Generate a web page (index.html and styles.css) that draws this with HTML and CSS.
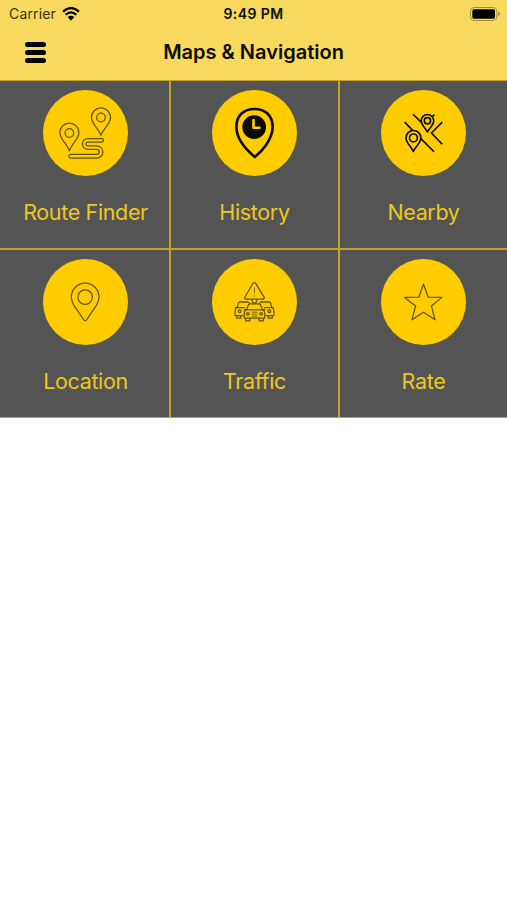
FILE: index.html
```
<!DOCTYPE html>
<html lang="en">
<head>
    <meta charset="UTF-8">
    <meta name="viewport" content="width=device-width, initial-scale=1.0">
    <title>Maps &amp; Navigation</title>
    <link rel="stylesheet" href="styles.css">
</head>
<body>
    <header class="header">
        <div class="status-bar">
            <div class="carrier">
                <span>Carrier</span>
                <svg class="wifi" viewBox="0 0 54 42">
                    <path d="M3 14 Q27 -8 51 14" />
                    <path d="M11 23 Q27 9 43 23" />
                    <path class="wifi-dot" d="M17 30 Q27 22 37 30 L27 41 Z" />
                </svg>
            </div>
            <div class="time">9:49 PM</div>
            <div class="battery-wrap">
                <svg class="battery" viewBox="0 0 90 42">
                    <rect class="battery-body" x="1.5" y="1.5" width="79" height="39" rx="11" />
                    <rect class="battery-level" x="7" y="7" width="68" height="28" rx="5" />
                    <path class="battery-cap" d="M84 14 Q90 17 90 21 Q90 25 84 28 Z" />
                </svg>
            </div>
        </div>
        <div class="nav-bar">
            <button class="menu-btn" aria-label="Menu">
                <span></span>
                <span></span>
                <span></span>
            </button>
            <h1>Maps &amp; Navigation</h1>
        </div>
    </header>

    <main class="menu-grid">
        <a class="menu-item first">
            <svg class="icon" viewBox="21 17 258 258">
                <path d="M101 200 C95 180 72 164 72 145 A29 29 0 0 1 130 145 C130 164 107 180 101 200 Z" />
                <circle cx="101" cy="146" r="13" />
                <path d="M197 153 C191 134 168 118 168 99 A29 29 0 0 1 226 99 C226 118 203 134 197 153 Z" />
                <circle cx="197" cy="99" r="13" />
                <path d="M199 163 H157 A16 16 0 0 0 157 196 H184 A7.500 7.500 0 0 1 184 211 H105 A5.500 5.500 0 0 0 105 222 H184 A18.500 18.500 0 0 0 184 185 H157 A5.500 5.500 0 0 1 157 174 H199 A5.500 5.500 0 0 0 199 163 Z" />
            </svg>
            <span class="label">Route Finder</span>
        </a>
        <a class="menu-item">
            <svg class="icon dark" viewBox="21 17 258 258">
                <path class="thick" d="M151 219 C132 203 95 167 95 128 C95 92 118 73 150 73 C182 73 205 92 205 128 C205 167 170 203 151 219 Z" />
                <circle class="solid" cx="149" cy="128" r="36" />
                <path class="clock-hands" d="M147 107 V130 H165" />
            </svg>
            <span class="label">History</span>
        </a>
        <a class="menu-item">
            <svg class="icon dark" viewBox="21 17 258 258">
                <path d="M119 202 C113 187 97 177 97 161 A22.500 22.500 0 0 1 142 161 C142 177 125 187 119 202 Z" />
                <circle cx="119.500" cy="161" r="12" />
                <path d="M162 143 C157 132 143 122 143 109 A19 19 0 0 1 181 109 C181 122 167 132 162 143 Z" />
                <circle cx="162" cy="109" r="9.500" />
                <path d="M93 113 L117 138 M142 163 L182 203 M118 89 L143 113 M176 97 L183 90 M207 113 L174 146 L207 180" />
            </svg>
            <span class="label">Nearby</span>
        </a>
        <a class="menu-item first">
            <svg class="icon" viewBox="21 17 258 258">
                <path d="M145 200 L116 158 C111 149 107 143 107 131 A42 42 0 0 1 191 131 C191 143 187 149 182 158 L153 200 Q149 205 145 200 Z" />
                <circle cx="149" cy="131" r="22" />
            </svg>
            <span class="label">Location</span>
        </a>
        <a class="menu-item">
            <svg class="icon" viewBox="21 17 258 258">
                <path d="M145 90 L121 131 Q119 136 124 137 H176 Q181 136 179 131 L154 90 Q150 84 145 90 Z" />
                <path class="thin" d="M149.500 102 V120 M149.500 126 V130" />
                <path d="M143 138 V144 L147 149 H153 L157 144 V138" />
                <!-- cars behind -->
                <path d="M97 163 L102 148 Q103 146 106 146 H130 L135 149 M97 163 H121 M97 163 Q91 166 91 173 V187 H117 M91 163 H95 M96 188 V195 H108 V188" />
                <path d="M203 163 L198 148 Q197 146 194 146 H170 L165 149 M203 163 H179 M203 163 Q209 166 209 173 V187 H183 M209 163 H205 M204 188 V195 H192 V188" />
                <circle cx="105" cy="174" r="4" />
                <circle cx="195" cy="174" r="4" />
                <!-- front car -->
                <path d="M125 170 L132 154 Q133 152 136 152 H164 Q167 152 168 154 L175 170 Z" />
                <path d="M125 170 Q119 173 119 180 V195 H181 V180 Q181 173 175 170 M117 169 H123 M183 169 H177 M123 196 V203 H136 V196 M177 196 V203 H164 V196" />
                <circle cx="130" cy="182" r="4" />
                <circle cx="170" cy="182" r="4" />
                <path class="thin" d="M141 177 H159 M141 183 H159 M141 189 H159" />
            </svg>
            <span class="label">Traffic</span>
        </a>
        <a class="menu-item">
            <svg class="icon" viewBox="21 17 258 258">
                <path d="M150 92 L164 131 L206 132 L174 158 L185 200 L150 177 L115 200 L126 158 L93 132 L136 131 Z" />
            </svg>
            <span class="label">Rate</span>
        </a>
    </main>
</body>
</html>
```
FILE: styles.css
```
* {
    box-sizing: border-box;
}
body {
    margin: 0;
    background: #fff;
    font-family: Inter, "Liberation Sans", sans-serif;
}
.header {
    height: 80px;
    background: #f7da5d;
    color: #0c0b04;
}
.status-bar {
    display: grid;
    grid-template-columns: 1fr auto 1fr;
    align-items: center;
    height: 27px;
    padding: 0 7px 0 9px;
    font-size: 14px;
}
.carrier {
    display: flex;
    align-items: center;
    gap: 6px;
    color: #37310f;
    letter-spacing: 0.15px;
}
.wifi {
    width: 18px;
    height: 14px;
    fill: none;
    stroke: #000;
    stroke-width: 6.5;
}
.wifi .wifi-dot {
    fill: #000;
    stroke: none;
}
.time {
    margin-right: 2px;
    font-weight: 600;
    letter-spacing: 0.4px;
}
.battery-wrap {
    display: flex;
    justify-content: flex-end;
}
.battery {
    width: 30px;
    height: 14px;
}
.battery-body {
    fill: none;
    stroke: #a08d3c;
    stroke-width: 3;
}
.battery-level {
    fill: #000;
}
.battery-cap {
    fill: #a08d3c;
}
.nav-bar {
    display: grid;
    grid-template-columns: 80px 1fr 80px;
    align-items: center;
    height: 50px;
}
.menu-btn {
    display: flex;
    flex-direction: column;
    gap: 3px;
    width: 21px;
    margin-left: 25px;
    padding: 0;
    border: none;
    background: none;
}
.menu-btn span {
    height: 5px;
    border-radius: 3px;
    background: #000;
}
h1 {
    margin: 0;
    font-size: 20px;
    font-weight: 600;
    text-align: center;
    white-space: nowrap;
}
.menu-grid {
    display: grid;
    grid-template-columns: 169px 167px 1fr;
    grid-template-rows: 167px 167px;
    gap: 2px;
    padding: 1px 0;
    background: #c4a129;
}
.menu-item {
    display: flex;
    flex-direction: column;
    align-items: center;
    padding-top: 9px;
    background: #545454;
}
.menu-item.first {
    padding-left: 2px;
}
.icon {
    width: 85px;
    height: 86px;
    border-radius: 50%;
    background: #fc0;
    fill: none;
    stroke: #5f5316;
    stroke-width: 3.8;
    stroke-linejoin: round;
}
.icon.dark {
    stroke: #0d0a00;
    stroke-width: 5;
}
.icon .thick {
    stroke-width: 8;
}
.icon .thin {
    stroke-width: 2.5;
}
.icon .solid {
    fill: #0d0a00;
    stroke: none;
}
.icon .clock-hands {
    stroke: #fc0;
    stroke-width: 8;
    stroke-linecap: round;
}
.label {
    margin-top: 22px;
    color: #edc81d;
    font-size: 21.5px;
    letter-spacing: -0.35px;
    line-height: 28px;
}
```
